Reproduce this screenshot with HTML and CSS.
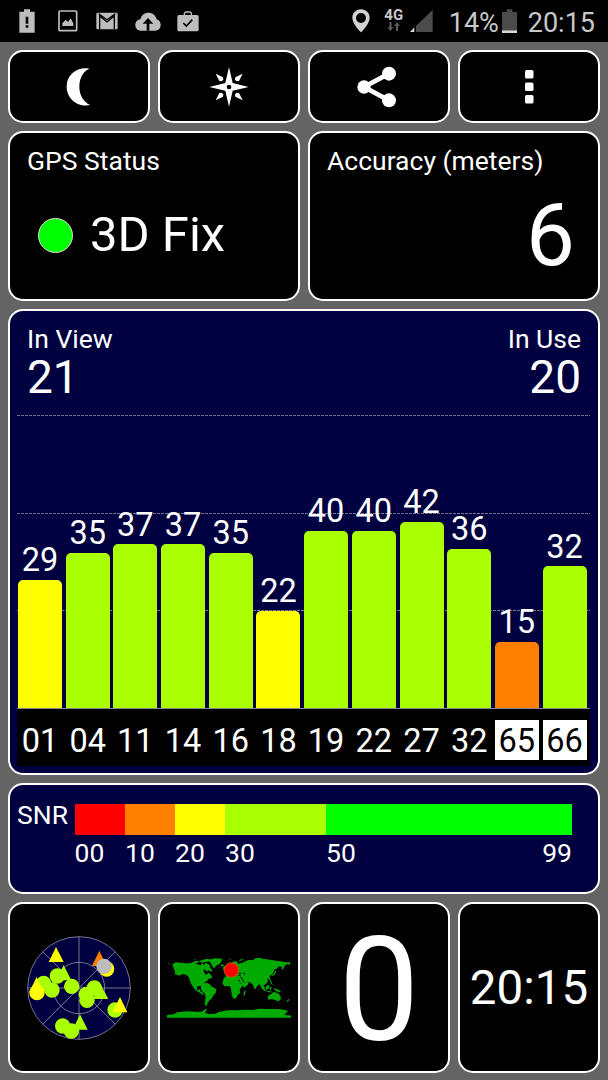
FILE: index.html
```html
<!DOCTYPE html>
<html lang="en">
<head>
  <meta charset="utf-8">
  <title>GPS Test</title>
  <link rel="stylesheet" href="styles.css">
</head>
<body>
  <header class="status-bar">
    <div class="notifications">
      <svg width="16" height="24" viewBox="57 28 48 72"><path fill="#bdbdbd" d="M72 29h18v7h14v63H58V36h14z"/><path d="M77 51h8v21h-8zM77 77h8v7h-8z"/></svg>
      <svg width="20" height="22" viewBox="173 32 60 66"><rect x="176" y="35" width="53" height="59" rx="3" fill="none" stroke="#bdbdbd" stroke-width="5"/><path fill="#bdbdbd" d="M186 80v-8l10-11 7 7 8-11 8 15v8z"/></svg>
      <svg width="22" height="18" viewBox="291 38 66 54"><rect x="292" y="40" width="64" height="50" rx="4" fill="#bdbdbd"/><path fill="none" stroke="#000" stroke-width="4" d="M302 90V50l22 18 22-18v40M299 43l25 18 25-18"/></svg>
      <svg width="26" height="19" viewBox="407 37 78 57"><path fill="#bdbdbd" d="M424 93c-10 0-16-8-16-17 0-10 7-16 15-17 3-13 12-20 24-20 13 0 22 8 25 20 7 2 12 8 12 17 0 10-7 17-17 17z"/><path d="M446 55l16 17h-12v21h-8V72h-12z"/></svg>
      <svg width="22" height="21" viewBox="535 33 66 63"><rect x="536" y="45" width="64" height="49" rx="5" fill="#bdbdbd"/><path fill="none" stroke="#bdbdbd" stroke-width="4" d="M557 46v-7l4-3h13l4 3v7"/><path fill="none" stroke="#000" stroke-width="5" d="M554 69l9 9 18-19"/></svg>
    </div>
    <div class="system">
      <svg class="pin" width="18" height="24" viewBox="143 29 54 72"><path fill="#d2d2d2" fill-rule="evenodd" d="M170 30c-15 0-26 11-26 25 0 19 26 44 26 44s26-25 26-44c0-14-11-25-26-25zm0 11a15 15 0 1 1 0 30 15 15 0 0 1 0-30z"/></svg>
      <div class="network">
        <span>4G</span>
        <svg width="14" height="9" viewBox="0 0 14 9"><path fill="#5c5c5c" d="M2.500 0h2v5h2L3.500 9 .5 5h2zM9 9h2V4h2L10 0 7 4h2z"/></svg>
      </div>
      <svg class="signal" width="23" height="24" viewBox="320 29 69 72"><path fill="#4b4b4b" d="M388 31v67h-50V80z"/><path fill="#d8d8d8" d="M320 98l13-14v14z"/></svg>
      <span class="percent">14%</span>
      <svg class="battery" width="15" height="25" viewBox="597 26 45 75"><path fill="#4b4b4b" d="M611 27h17v8h14v55h-45V35h14z"/><path fill="#d8d8d8" d="M597 90h45v8h-45z"/></svg>
      <span class="clock">20:15</span>
    </div>
  </header>

  <main class="dashboard">
    <div class="panel button">
      <svg width="26" height="40" viewBox="197 200 78 120"><path fill="#fff" d="M267 205c-36-6-68 17-68 54s35 63 71 55c-19-8-33-28-33-55s13-47 30-54z"/></svg>
    </div>
    <div class="panel button">
      <svg width="40" height="40" viewBox="626 200 120 120">
        <g fill="#fff">
          <path d="M686 200l11 48 48 12-48 11-11 48-11-48-48-11 48-12z"/>
          <path d="M646 220l22 11 1 7-5 5-7-1zM727 220l-22 11-1 7 5 5 7-1zM646 300l22-11 1-7-5-5-7 1zM727 300l-22-11-1-7 5-5 7 1z"/>
        </g>
        <circle cx="686" cy="260" r="7"/>
      </svg>
    </div>
    <div class="panel button share">
      <svg width="40" height="42" viewBox="158 196 120 126"><path fill="none" stroke="#fff" stroke-width="14" d="M254 219l-75 40 75 40"/><g fill="#fff"><circle cx="254" cy="219" r="21"/><circle cx="179" cy="259" r="20"/><circle cx="254" cy="299" r="21"/></g></svg>
    </div>
    <div class="panel button">
      <svg width="10" height="36" viewBox="0 0 10 36"><g fill="#fff"><rect x="1" y="1" width="8.500" height="8.500" rx="1.500"/><rect x="1" y="13.500" width="8.500" height="8.500" rx="1.500"/><rect x="1" y="26" width="8.500" height="8.500" rx="1.500"/></g></svg>
    </div>

    <section class="panel half">
      <div class="label">GPS Status</div>
      <div class="fix"><span class="led"></span>3D Fix</div>
    </section>
    <section class="panel half">
      <div class="label">Accuracy (meters)</div>
      <div class="accuracy">6</div>
    </section>

    <section class="panel full satellites">
      <div class="counts">
        <div><div class="label">In View</div><div class="count">21</div></div>
        <div class="in-use"><div class="label">In Use</div><div class="count">20</div></div>
      </div>
      <div class="chart">
        <div class="bar yellow" style="--snr: 29"><span>29</span></div>
        <div class="bar" style="--snr: 35"><span>35</span></div>
        <div class="bar" style="--snr: 37"><span>37</span></div>
        <div class="bar" style="--snr: 37"><span>37</span></div>
        <div class="bar" style="--snr: 35"><span>35</span></div>
        <div class="bar yellow" style="--snr: 22"><span>22</span></div>
        <div class="bar" style="--snr: 40"><span>40</span></div>
        <div class="bar" style="--snr: 40"><span>40</span></div>
        <div class="bar" style="--snr: 42"><span>42</span></div>
        <div class="bar" style="--snr: 36"><span>36</span></div>
        <div class="bar orange" style="--snr: 15"><span>15</span></div>
        <div class="bar" style="--snr: 32"><span>32</span></div>
      </div>
      <div class="ids">
        <span>01</span><span>04</span><span>11</span><span>14</span><span>16</span><span>18</span><span>19</span><span>22</span><span>27</span><span>32</span><span class="glonass">65</span><span class="glonass">66</span>
      </div>
    </section>

    <section class="panel full legend">
      <div class="snr">SNR</div>
      <div class="scale">
        <div class="step"><i class="red"></i>00</div>
        <div class="step"><i class="orange"></i>10</div>
        <div class="step"><i class="yellow"></i>20</div>
        <div class="step"><i class="lime"></i>30</div>
        <div class="step"><i class="green"></i><b>50</b><b>99</b></div>
      </div>
    </section>

    <!-- sky view -->
    <div class="panel tile">
      <svg width="104" height="104" viewBox="80 105 312 312">
        <g fill="none" stroke="#8b8ba0" stroke-width="2.500">
          <circle cx="236" cy="261" r="154" fill="#000040"/>
          <circle cx="236" cy="261" r="77"/>
          <path d="M236 107v308M82 261h308M127 152l218 218M345 152L127 370"/>
        </g>
        <g fill="#aaff00">
          <circle cx="171" cy="225" r="23"/>
          <path d="M190 193l23 45h-46z"/>
          <circle cx="130" cy="247" r="23"/>
          <circle cx="155" cy="267" r="23"/>
          <circle cx="214" cy="256" r="23"/>
          <circle cx="282" cy="261" r="23"/>
          <circle cx="258" cy="280" r="23"/>
          <circle cx="260" cy="298" r="23"/>
          <path d="M300 249l24 45h-46z"/>
          <circle cx="187" cy="375" r="23"/>
          <circle cx="213" cy="390" r="23"/>
          <path d="M239 340l23 46h-45z"/>
          <circle cx="344" cy="327" r="23"/>
        </g>
        <path fill="#ff8000" d="M297 149l22 46h-44z"/>
        <g fill="#ff0">
          <circle cx="110" cy="275" r="23"/>
          <path d="M109 228l22 45H87zM167 138l23 45h-45zM359 288l22 46h-45z"/>
          <circle cx="319" cy="204" r="23"/>
        </g>
        <circle cx="311" cy="196" r="23" fill="#bdbdbd"/>
      </svg>
    </div>

    <!-- world map -->
    <div class="panel tile">
      <svg width="124" height="60" viewBox="36 55 372 180">
        <g fill="#00aa00">
          <path d="M52 74l10-6 28 3 14 0 12-3 11 6 10 3 5-7 5 6 4-5 8 3 5 9 8 9-3 4-9-4-4 4-7-8-4 6 4 6 3 6 9-7 7 7 5 9-12 2-5 6-7 5-4 8-2 6-6-3-10 1-2 8 3 4 6-4 2 7 7 4 5 5-5 1-9-6-12-7-6-8-8-12-4-11-3-9-7-6-10-3-13 5-4-3-10-1 4-5z"/>
          <path d="M108 69l13-5 12 1-5 5zM132 64l20-6 14 1-8 7-18 3zM148 69l12 4 7 9-6 1-9-7z"/>
          <path d="M162 60l19-4 20 1-2 10-7 7-8 3-5 8-6-3-4-9-5-7-9-2z"/>
          <path d="M143 132l9-3 12 4 5 7 15 8-2 12-7 7-5 10-7 5-5 9-3 7-6-1 1-10 2-17-3-9-9-8-3-9z"/>
          <path d="M206 116l8-7 14-1 8 5 12 1 4 11 8 8 5 1-6 9-5 8 1 9-7 7-4 8-8 3-5-10-2-12-1-9-4-8-15 1-7-8z"/>
          <path d="M267 156l5-5-2 15-5 2zM197 75l8-1 2 4-8 3z"/>
          <path d="M210 99l6-5-1-6 7-4 5-5 1-9 12-6 9 3-3 5 15-2 10-5 12-4 11 0 8-5 13-2 9 4 12 1 14 2 13 2 13 2 10 2 20 1-2 6-9 0-7 6-3 8-5 2 1-9-9-1-7 7-7 2-2 7-5 9-8 4 3 8-3 4-5-6 0 11-6 8-7 2 4 7-1 7-6-2-5-9-5-6-8 10-3 6-4-4-4-12-9-5-7-1 4 5-7 7-7 5-9-15-4-3 0-6-11 1-6-5-4 4-6-5-6 2-5 5z"/>
          <path d="M204 84l5-5 4 10-8 1zM358 99l4-8 2 3-4 10-8 6-1-3zM318 137l9 9 6 7-4 2-9-9zM331 143l8-7 4 2-2 9-7 4zM344 143l6-1-3 10-3-1zM331 154l15 1 8 3-14 0zM357 145l14 5 9 8-12-2-9-5zM344 121l4-1 2 9 4 7-5-2z"/>
          <path d="M339 168l9-5 7-5 8 0 4 5 3-6 3 9 5 7-2 8-7 4-9-4-10-3-10 2-2-6zM367 182l4 0-2 4zM395 184l8-7 1 3-8 8zM111 123l12 1 11 5-8 0z"/>
          <path d="M36 226l20-2 12-6 30-3 24 1 18 0 13-9 3 2-6 10 11 4 20-1 10-5 26-5 26 0 26-2 24 1 20-4 32 1 27 0 22 4 5 3-6 6-5 5 22 2v6H36z"/>
          <path d="M37 72l8-1-2 3zM251 62l11-4 4 1-11 5zM313 62l8-4 5 4zM220 58l9-1-1 3zM116 60l8-1-3 3zM398 71l8 1-3 4z"/>
        </g>
        <path stroke="#000" stroke-width="3" fill="none" d="M251 101l8 0M250 107l7 1M266 98l3 8M256 111l12 17M222 105l16 3"/>
        <circle cx="229" cy="91" r="22" fill="#f00" stroke="#c87800" stroke-width="2"/>
      </svg>
    </div>
    <div class="panel tile speed">0</div>
    <div class="panel tile time">20:15</div>
  </main>
</body>
</html>
```
FILE: styles.css
```css
* {
  box-sizing: border-box;
}
body {
  margin: 0;
  width: 608px;
  height: 1080px;
  background: #646464;
  color: #fff;
  font-family: Roboto, "Liberation Sans", sans-serif;
  overflow: hidden;
}
svg {
  display: block;
  flex: none;
}

/* status bar */
.status-bar {
  display: flex;
  justify-content: space-between;
  height: 42px;
  padding: 0 13px 0 19px;
  background: #000;
  color: #c8c8c8;
}
.notifications,
.system {
  display: flex;
  align-items: center;
}
.notifications {
  gap: 17.500px;
}
.notifications svg:nth-child(1) {
  margin-right: 5px;
}
.notifications svg:nth-child(3) {
  margin-left: 1px;
}
.notifications svg:nth-child(4) {
  margin-left: -1px;
}
.notifications svg:nth-child(5) {
  margin-left: -1px;
}
.system {
  font-size: 27px;
}
.network {
  display: flex;
  flex-direction: column;
  align-items: center;
  width: 20px;
  margin: 0 6px 0 14px;
  font-size: 15px;
  line-height: 14px;
  font-weight: bold;
}
.network span {
  margin-top: -3px;
}
.percent {
  width: 49px;
  margin: 3px 4px 0 16px;
}
.clock {
  margin: 3px 0 0 11px;
}

/* panels */
.dashboard {
  display: grid;
  grid-template-columns: repeat(4, 142px);
  grid-template-rows: 73px 170px 466px 111px 171px;
  gap: 8px;
  padding: 8px;
}
.panel {
  min-width: 0;
  border: 2px solid #fff;
  border-radius: 15px;
  background: #000;
}
.button,
.tile {
  display: flex;
  align-items: center;
  justify-content: center;
}
.share {
  padding-right: 4px;
}
.half {
  grid-column: span 2;
  padding: 12px 24px 0 17px;
}
.full {
  grid-column: span 4;
  background: #000040;
}
.label {
  font-size: 26.500px;
  line-height: 31px;
}
.fix {
  display: flex;
  align-items: center;
  gap: 17px;
  margin-top: 29px;
  padding-left: 11px;
  font-size: 49px;
  line-height: 60px;
}
.led {
  width: 35px;
  height: 35px;
  border: 1px solid #ddd;
  border-radius: 50%;
  background: #0f0;
}
.accuracy {
  margin: 24px -1px 0 0;
  font-size: 87px;
  line-height: 70px;
  text-align: right;
}

/* satellite chart */
.satellites {
  padding: 12px 8px 0 7px;
}
.counts {
  display: flex;
  justify-content: space-between;
  height: 92px;
  padding: 0 9px 0 10px;
}
.in-use {
  text-align: right;
}
.count {
  font-size: 46px;
  line-height: 46px;
}
.chart {
  --dash: repeating-linear-gradient(90deg, #74748f 0 3px, transparent 3px 4px);
  display: flex;
  align-items: flex-end;
  gap: 3.700px;
  height: 294px;
  padding-left: 1px;
  border-bottom: 1px solid #85858f;
  background: var(--dash) 0 0 / 100% 1px no-repeat, var(--dash) 0 98px / 100% 1px no-repeat, var(--dash) 0 195px / 100% 1px no-repeat;
}
.bar {
  width: 44px;
  height: calc(var(--snr) * 4.430px);
  border-radius: 5px 5px 0 0;
  background: #af0;
  text-align: center;
}
.bar span {
  display: block;
  margin-top: -37.500px;
  font-size: 32.500px;
  line-height: 36px;
}
.ids {
  display: flex;
  align-items: center;
  gap: 3.700px;
  height: 57px;
  padding: 5px 0 0 1px;
  background: #000;
  font-size: 32.500px;
  line-height: 42px;
  text-align: center;
}
.ids span {
  width: 44px;
  height: 40px;
}
.ids .glonass {
  background: #fff;
  color: #000;
}

/* snr legend */
.legend {
  display: flex;
  padding: 19px 26px 0 7px;
  font-size: 26.500px;
}
.snr {
  width: 57.500px;
  line-height: 22px;
}
.scale {
  display: grid;
  grid-template-columns: 50.500px 50px 50px 101px 246px;
}
.step {
  line-height: 36px;
}
.step i {
  display: block;
  height: 31px;
}
.step b {
  font-weight: normal;
}
.step b:last-child {
  float: right;
}
.red {
  background: #f00;
}
.orange {
  background: #ff8000;
}
.yellow {
  background: #ff0;
}
.lime {
  background: #af0;
}
.green {
  background: #0f0;
}

.speed {
  padding-top: 6px;
  font-size: 144px;
}
.time {
  font-size: 47.500px;
}
```
